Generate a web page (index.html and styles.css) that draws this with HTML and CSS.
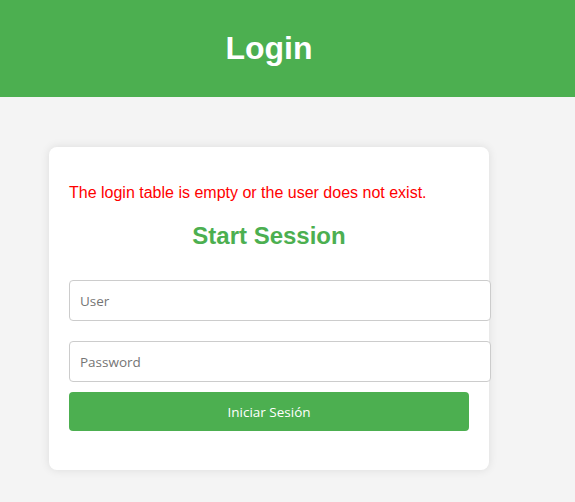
FILE: index.html
```html
<!DOCTYPE html>
<html lang="en">
<head>
<meta charset="utf-8">
<title>Login</title>
<link rel="stylesheet" href="styles.css">
</head>
<body>
<header class="topbar">
  <h1 class="topbar-title">Login</h1>
</header>
<main class="page">
  <section class="card">
    <p class="error">The login table is empty or the user does not exist.</p>
    <h2 class="card-title">Start Session</h2>
    <form class="form">
      <input class="field" type="text" placeholder="User">
      <input class="field field-last" type="password" placeholder="Password">
      <button class="submit" type="button">Iniciar Sesión</button>
    </form>
  </section>
</main>
</body>
</html>
```
FILE: styles.css
```css
html, body {
  margin: 0;
  padding: 0;
}
body {
  background: #f4f4f4;
  font-family: "Liberation Sans", Arial, sans-serif;
  width: 575px;
  height: 502px;
  overflow: hidden;
}
.topbar {
  background: #4caf50;
  height: 97px;
  display: flex;
  align-items: center;
  justify-content: center;
  padding-right: 37px;
}
.topbar-title {
  margin: 0;
  color: #fff;
  font-size: 32px;
  font-weight: bold;
  line-height: 37px;
}
.page {
  display: flex;
  justify-content: center;
  padding: 50px 37px 0 0;
}
.card {
  width: 400px;
  background: #fff;
  border-radius: 8px;
  box-shadow: 0 0 10px rgba(0, 0, 0, 0.1);
  padding: 20px 20px 39px;
}
.error {
  margin: 17px 0 0;
  color: #ff0000;
  font-size: 16px;
  line-height: 18px;
}
.card-title {
  margin: 20px 0 0;
  color: #4caf50;
  font-size: 24px;
  font-weight: bold;
  line-height: 28px;
  text-align: center;
}
.form {
  margin-top: 30px;
  display: flex;
  flex-direction: column;
  align-items: flex-start;
}
.field {
  box-sizing: content-box;
  width: 400px;
  height: 19px;
  padding: 10px;
  margin: 0 0 20px;
  border: 1px solid #ccc;
  border-radius: 4px;
  font-family: "Open Sans", "Noto Sans", sans-serif;
  font-size: 13.5px;
  color: #333;
  background: #fff;
  outline: none;
}
.field::placeholder {
  color: #757575;
}
.field-last {
  margin-bottom: 10px;
}
.submit {
  width: 400px;
  height: 39px;
  border: none;
  border-radius: 4px;
  background: #4caf50;
  color: #fff;
  font-family: "Open Sans", "Noto Sans", sans-serif;
  font-size: 13.5px;
  cursor: pointer;
}
```
